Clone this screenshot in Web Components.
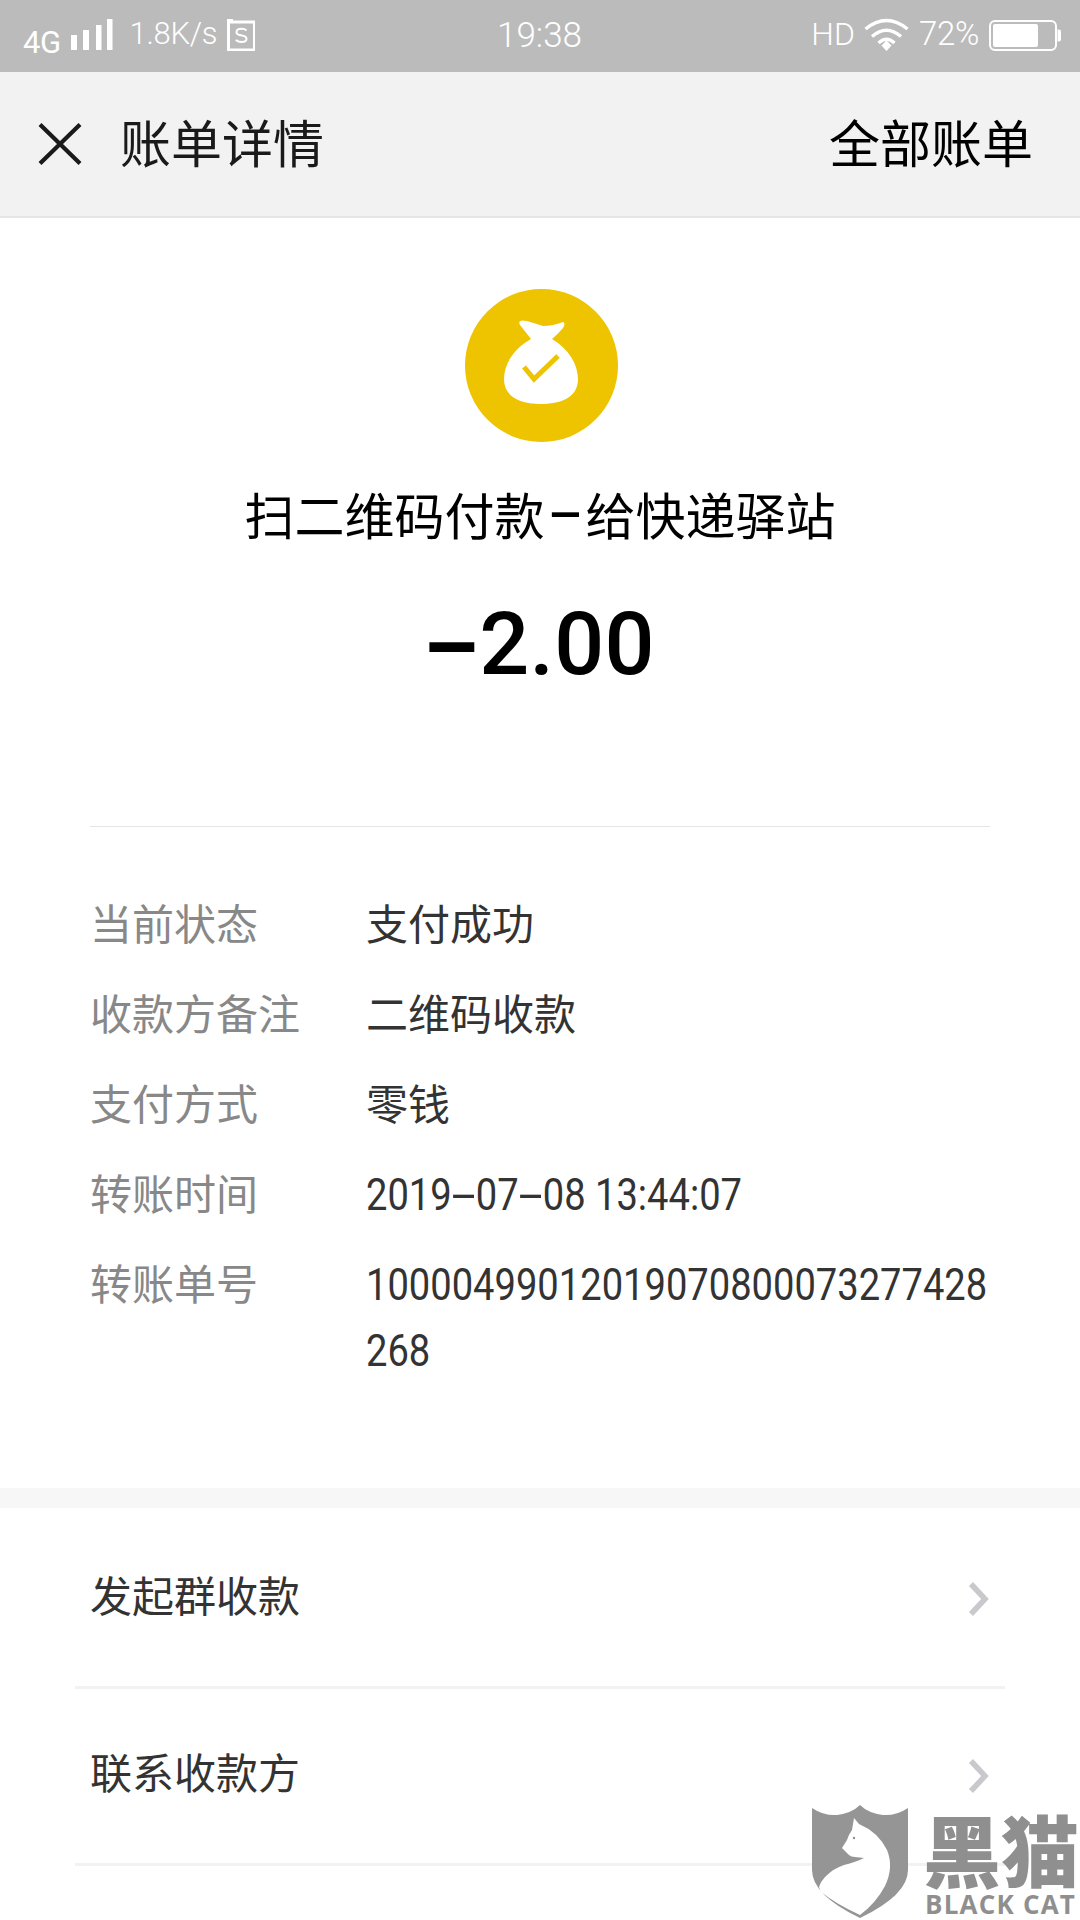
<!DOCTYPE html>
<html lang="zh-CN"><head><meta charset="utf-8"><title>账单详情</title>
<style>
html,body{margin:0;padding:0;background:#fff}
body{width:1080px;height:1920px;overflow:hidden;position:relative;font-family:"Noto Sans CJK SC","Noto Sans",sans-serif}
</style></head><body>
<x-status></x-status>
<x-nav title-text="账单详情" action="全部账单"></x-nav>
<x-hero title-a="扫二维码付款" title-b="给快递驿站" amount="2.00"></x-hero>
<x-details>
  <x-row label="当前状态">支付成功</x-row>
  <x-row label="收款方备注">二维码收款</x-row>
  <x-row label="支付方式">零钱</x-row>
  <x-row label="转账时间" num="2019-07-08 13:44:07"></x-row>
  <x-row label="转账单号" num="10000499012019070800073277428268"></x-row>
</x-details>
<x-band></x-band>
<x-menu>
  <x-item>发起群收款</x-item>
  <x-item>联系收款方</x-item>
</x-menu>
<x-mark></x-mark>
<script>
function def(name,html,init){
  customElements.define(name,class extends HTMLElement{
    constructor(){super();this.attachShadow({mode:"open"}).innerHTML=html;}
    connectedCallback(){if(init)init(this,this.shadowRoot);}
  });
}
def("x-status",`<style>
:host{display:flex;align-items:center;height:72px;background:#bbb;color:#fff;font-family:Roboto,sans-serif;font-weight:300;padding:0 19px 0 23px;box-sizing:border-box;position:relative}
.l,.r{display:flex;align-items:center}
.l{flex:1}.r{flex:1;justify-content:flex-end}
.g{font-size:31px;font-weight:400;line-height:28px;margin-top:14px;letter-spacing:-.5px}
.sig{margin-left:10px;margin-top:-3px;display:block}
.sp{font-size:31px;margin-left:17px;margin-top:-4px;line-height:40px;letter-spacing:-.3px}
.s{margin-left:10px;margin-top:-3px;display:block}
.t{font-size:35px;line-height:40px;margin:-1px 0 0 -5px}
.hd{font-size:32px;line-height:40px;margin-top:-4px}
.w{margin-left:9px;margin-top:-3px;display:block}
.pc{font-size:33px;line-height:40px;margin:-4px 0 0 10px;letter-spacing:-.3px}
.b{margin-left:10px;margin-top:-2px;display:block}
</style>
<div class="l"><span class="g">4G</span>
<svg class="sig" width="42" height="32" viewBox="0 0 42 32" fill="#fff"><rect x="0" y="16" width="6" height="15"/><rect x="12" y="11" width="6" height="20"/><rect x="25" y="6" width="5.500" height="25"/><rect x="36" y="0" width="5.500" height="31"/></svg>
<span class="sp">1.8K/s</span>
<svg class="s" width="28" height="32" viewBox="0 0 28 32"><path d="M0 1h6M1.500 1v30h26V3h-26" fill="none" stroke="#fff" stroke-width="3"/><path d="M19.500 11.500Q18 9.800 14.500 9.800 9.500 9.800 9.500 13.200 9.500 15.500 14 16.200 19.500 17 19.500 19.800 19.500 23 14.500 23 10.500 23 9 20.800" fill="none" stroke="#fff" stroke-width="2"/></svg></div>
<span class="t">19:38</span>
<div class="r"><span class="hd">HD</span>
<svg class="w" width="45" height="34" viewBox="0 0 45 34" fill="none" stroke="#fff" stroke-width="3.500"><path d="M1.500 11Q22.500-6 43.500 11"/><path d="M8 18.500Q22.500 6 37 18.500"/><path d="M14.500 25Q22.500 17.500 30.500 25"/><path d="M17.500 27.500L22.500 22.500 27.500 27.500 22.500 33Z" fill="#fff" stroke="none"/></svg>
<span class="pc">72%</span>
<svg class="b" width="72" height="31" viewBox="0 0 72 31"><rect x="1" y="1" width="66" height="29" rx="5" fill="none" stroke="#fff" stroke-width="2"/><rect x="4" y="4" width="45" height="23" rx="2" fill="#fff"/><path d="M68.500 9.500h1.500q2 0 2 2v8q0 2-2 2h-1.500z" fill="#fff"/></svg></div>`);
def("x-nav",`<style>
:host{display:flex;align-items:center;height:146px;box-sizing:border-box;background:#f2f2f2;border-bottom:2px solid #e6e6e6;padding:0 47px 0 38px;font-size:51px;color:#1a1a1a}
svg{display:block;margin-right:38px}
.t{flex:1;line-height:60px;margin-top:-6px}
.a{color:#000;line-height:60px;margin-top:-6px}
</style><svg width="44" height="44" viewBox="0 0 44 44"><path d="M2 2.500L42 41.500M42 2.500L2 41.500" stroke="#1a1a1a" stroke-width="4.200" fill="none"/></svg><span class="t"></span><span class="a"></span>`,
(h,s)=>{s.querySelector(".t").textContent=h.getAttribute("title-text");s.querySelector(".a").textContent=h.getAttribute("action");});
def("x-hero",`<style>
:host{display:flex;flex-direction:column;align-items:center;padding-top:71px;background:#fff;color:#000}
svg{display:block;margin-left:2px}
.tt{margin-top:37px;margin-bottom:5px;font-size:50px;line-height:68px;display:flex;align-items:center;white-space:nowrap}
.d{display:inline-block;margin:0 12px;font:500 50px/68px Roboto,sans-serif;transform:scaleX(2.1)}
.am{margin-top:44px;font:500 88px/96px Roboto,sans-serif;display:flex;align-items:center;letter-spacing:.3px}
.m{display:inline-block;font-weight:700;margin:0 9px 0 10px;transform:scaleX(1.85)}
</style><svg width="153" height="153" viewBox="0 0 153 153"><circle cx="76.500" cy="76.500" r="76.500" fill="#eec300"/><path d="M55 36Q52 30 62 32 72 35 78 37 88 37 98 33 101 34 98 39 93 45 87 50C104 60 113 76 113 90 113 106 100 115 76 115 52 115 39 106 39 90 39 76 48 60 66 50 60 44 55 36Z" fill="#fff"/><path d="M59 78L69 90 93 67" fill="none" stroke="#eec300" stroke-width="5"/></svg>
<div class="tt"><span class="a"></span><span class="d">-</span><span class="b"></span></div>
<div class="am"><span class="m">-</span><span class="v"></span></div>`,
(h,s)=>{s.querySelector(".a").textContent=h.getAttribute("title-a");s.querySelector(".b").textContent=h.getAttribute("title-b");s.querySelector(".v").textContent=h.getAttribute("amount");});
def("x-details",`<style>
:host{display:block;margin:134px 90px 0;padding:62px 0 107px;border-top:1px solid #e5e5e5;background:#fff}
::slotted(x-row:not(:last-child)){margin-bottom:24px}
</style><slot></slot>`);
def("x-row",`<style>
:host{display:grid;grid-template-columns:276px 1fr;font-size:42px;line-height:66px;color:#333}
.l{color:#888;white-space:nowrap}
.n{display:block;width:735px;font:400 45px/66px Roboto,sans-serif;word-break:break-all;transform:translateY(3px) scaleX(.847);transform-origin:0 0}
.h{display:inline-block;margin:0 8px;transform:scaleX(2.3)}
</style><span class="l"></span><span class="v"><slot></slot></span>`,
(h,s)=>{s.querySelector(".l").textContent=h.getAttribute("label");const n=h.getAttribute("num");if(n){const e=document.createElement("span");e.className="n";
n.split("-").forEach((p,i)=>{if(i){const d=document.createElement("span");d.className="h";d.textContent="-";e.append(d);}e.append(p);});
s.querySelector(".v").replaceChildren(e);}});
def("x-band",`<style>:host{display:block;height:20px;background:#f7f7f7}</style>`);
def("x-menu",`<style>:host{display:block;margin:0 75px;padding-top:4px}</style><slot></slot>`);
def("x-item",`<style>
:host{display:flex;align-items:center;justify-content:space-between;height:177px;box-sizing:border-box;border-bottom:3px solid #f2f2f2;padding:0 16px 0 15px;font-size:42px;color:#333;line-height:60px}
span{margin-top:-10px}
svg{display:block}
</style><span><slot></slot></span><svg width="21" height="34" viewBox="0 0 21 34"><path d="M3 2L17 17 3 32" fill="none" stroke="#c8c8cd" stroke-width="5.500"/></svg>`);
def("x-mark",`<style>
:host{position:absolute;left:812px;top:1805px;width:268px;height:115px;display:block;color:#8f8f8f}
svg{position:absolute;left:0;top:0}
.c{position:absolute;left:111px;top:6px;font-size:78px;line-height:74px;font-weight:900;white-space:nowrap}
.e{position:absolute;left:113px;top:85px;font:700 26px/28px "Open Sans",Roboto,sans-serif;white-space:nowrap;letter-spacing:1.2px}
</style><svg width="96" height="114" viewBox="0 0 96 114"><path d="M0 3Q12 11 25 10 40 8 48 0 56 8 71 10 84 11 96 3V65Q96 90 48 113 0 90 0 65Z" fill="#8f8f8f" fill-opacity=".95"/><path d="M42 13L47 19Q66 27 75 45 82 62 73 81 64 98 48 110 24 99 9 87L7 82Q9 76 13 72 22 63 32 60 44 57 52 53L43 52Q39 52 37 50L30 43 35 35Q37 29 40 25Z" fill="#fff"/><circle cx="42" cy="33" r="1.200" fill="#8f8f8f"/></svg><span class="c">黑猫</span><span class="e">BLACK CAT</span>`);
</script>
</body></html>
